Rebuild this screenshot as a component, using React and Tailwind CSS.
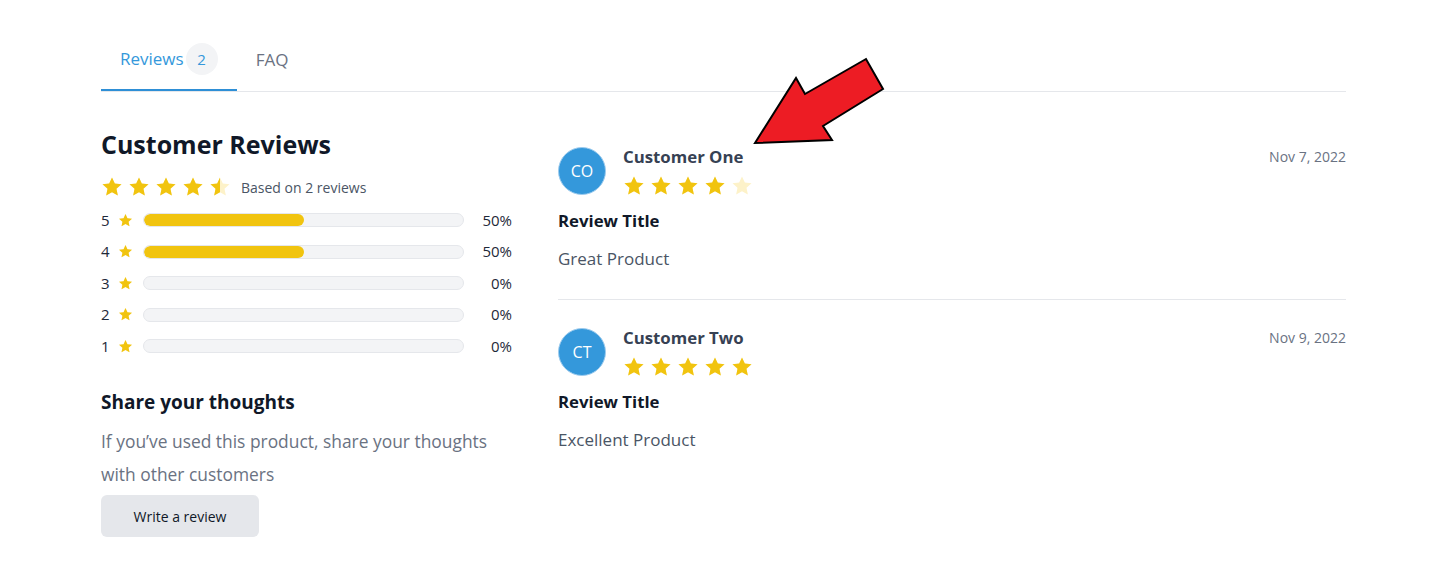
import React from "react";

const YELLOW = "#f1c40f";
const PALE = "#fdf2c9";

const Star = ({ size = 22, fill = 1, id }) => {
  const pts = "12,1.6 15.1,8.3 22.4,9.1 16.9,14 18.4,21.3 12,17.6 5.6,21.3 7.1,14 1.6,9.1 8.9,8.3";
  return (
    <svg width={size} height={size} viewBox="0 0 24 24" className="shrink-0">
      <defs>
        <clipPath id={id}>
          <rect x="0" y="0" width={24 * fill} height="24" />
        </clipPath>
      </defs>
      <polygon points={pts} fill={PALE} />
      <polygon points={pts} fill={YELLOW} clipPath={`url(#${id})`} />
    </svg>
  );
};

const Stars = ({ value, prefix }) => (
  <div className="flex items-center gap-[5px]">
    {[0, 1, 2, 3, 4].map((i) => (
      <Star
        key={i}
        id={`${prefix}-${i}`}
        fill={Math.max(0, Math.min(1, value - i))}
      />
    ))}
  </div>
);

const breakdown = [
  { n: 5, pct: 50 },
  { n: 4, pct: 50 },
  { n: 3, pct: 0 },
  { n: 2, pct: 0 },
  { n: 1, pct: 0 },
];

const reviews = [
  { initials: "CO", name: "Customer One", rating: 4, date: "Nov 7, 2022", title: "Review Title", body: "Great Product" },
  { initials: "CT", name: "Customer Two", rating: 5, date: "Nov 9, 2022", title: "Review Title", body: "Excellent Product" },
];

export default function App() {
  return (
    <div
      className="relative min-h-[587px] bg-white pl-[101px] pr-[99px] pt-[29px] text-gray-900"
      style={{ fontFamily: "'Open Sans', 'Liberation Sans', sans-serif" }}
    >
      {/* Tabs */}
      <div className="flex border-b border-gray-200">
        <div className="-mb-px flex h-[62px] items-center gap-[2px] border-b-2 border-[#2e8fd6] px-[19px] text-[17px] text-[#3498db]">
          Reviews
          <span className="flex h-[32px] w-[32px] items-center justify-center rounded-full bg-gray-100 text-[15px]">
            2
          </span>
        </div>
        <div className="flex h-[62px] items-center px-[19px] text-[17px] text-gray-500">
          FAQ
        </div>
      </div>

      <div className="grid grid-cols-[411px_1fr] gap-[46px] pt-[36px]">
        {/* Summary */}
        <div>
          <h2 className="text-[25px] font-bold leading-[32px] text-gray-900">
            Customer Reviews
          </h2>
          <div className="mt-[16px] flex items-center gap-[10px]">
            <Stars value={4.5} prefix="avg" />
            <span className="text-[14px] text-gray-600">Based on 2 reviews</span>
          </div>
          <div className="mt-[15px] flex flex-col gap-[17.5px]">
            {breakdown.map((r) => (
              <div key={r.n} className="flex h-[14px] items-center text-[15px] text-gray-800">
                <span className="w-[17px]">{r.n}</span>
                <Star size={15} id={`row-${r.n}`} />
                <div className="ml-[10px] h-[14px] flex-1 overflow-hidden rounded-full border border-gray-200 bg-gray-100">
                  <div className="h-full rounded-full bg-[#f1c40f]" style={{ width: `${r.pct}%` }} />
                </div>
                <span className="w-[48px] text-right">{r.pct}%</span>
              </div>
            ))}
          </div>

          <h3 className="mt-[35px] text-[19px] font-bold leading-[28px] text-gray-900">Share your thoughts</h3>
          <p className="mt-[9px] text-[17.4px] leading-[33px] text-gray-500">
            If you’ve used this product, share your thoughts with other customers
          </p>
          <button className="mt-[4px] h-[42px] w-[158px] rounded-md bg-gray-200 text-[14px] text-gray-900">
            Write a review
          </button>
        </div>

        {/* Review list */}
        <div>
          {reviews.map((r, idx) => (
            <div
              key={r.name}
              className={idx === 0 ? "border-b border-gray-200 pb-[28px] pt-[19px]" : "pt-[28px]"}
            >
              <div className="flex items-start">
                <div className="flex h-[48px] w-[48px] items-center justify-center rounded-full border border-[#9ccbee] bg-[#3498db] text-[16px] text-white">
                  {r.initials}
                </div>
                <div className="ml-[17px] flex-1">
                  <div className="text-[16.8px] font-bold leading-[19px] text-gray-700">{r.name}</div>
                  <div className="mt-[9px]">
                    <Stars value={r.rating} prefix={`rv${idx}`} />
                  </div>
                </div>
                <div className="text-[14px] leading-[20px] text-gray-500">{r.date}</div>
              </div>
              <div className="mt-[12px] text-[16.8px] font-bold leading-[24px] text-gray-900">{r.title}</div>
              <div className="mt-[14px] text-[17px] leading-[24px] text-gray-600">{r.body}</div>
            </div>
          ))}
        </div>
      </div>

      {/* Annotation arrow */}
      <svg className="pointer-events-none absolute left-0 top-0" width="1445" height="587">
        <polygon
          points="755,143 796,78 805,94 866,59 883,89 823,126 832,140"
          fill="#ed1c24"
          stroke="#000"
          strokeWidth="2"
        />
      </svg>
    </div>
  );
}
